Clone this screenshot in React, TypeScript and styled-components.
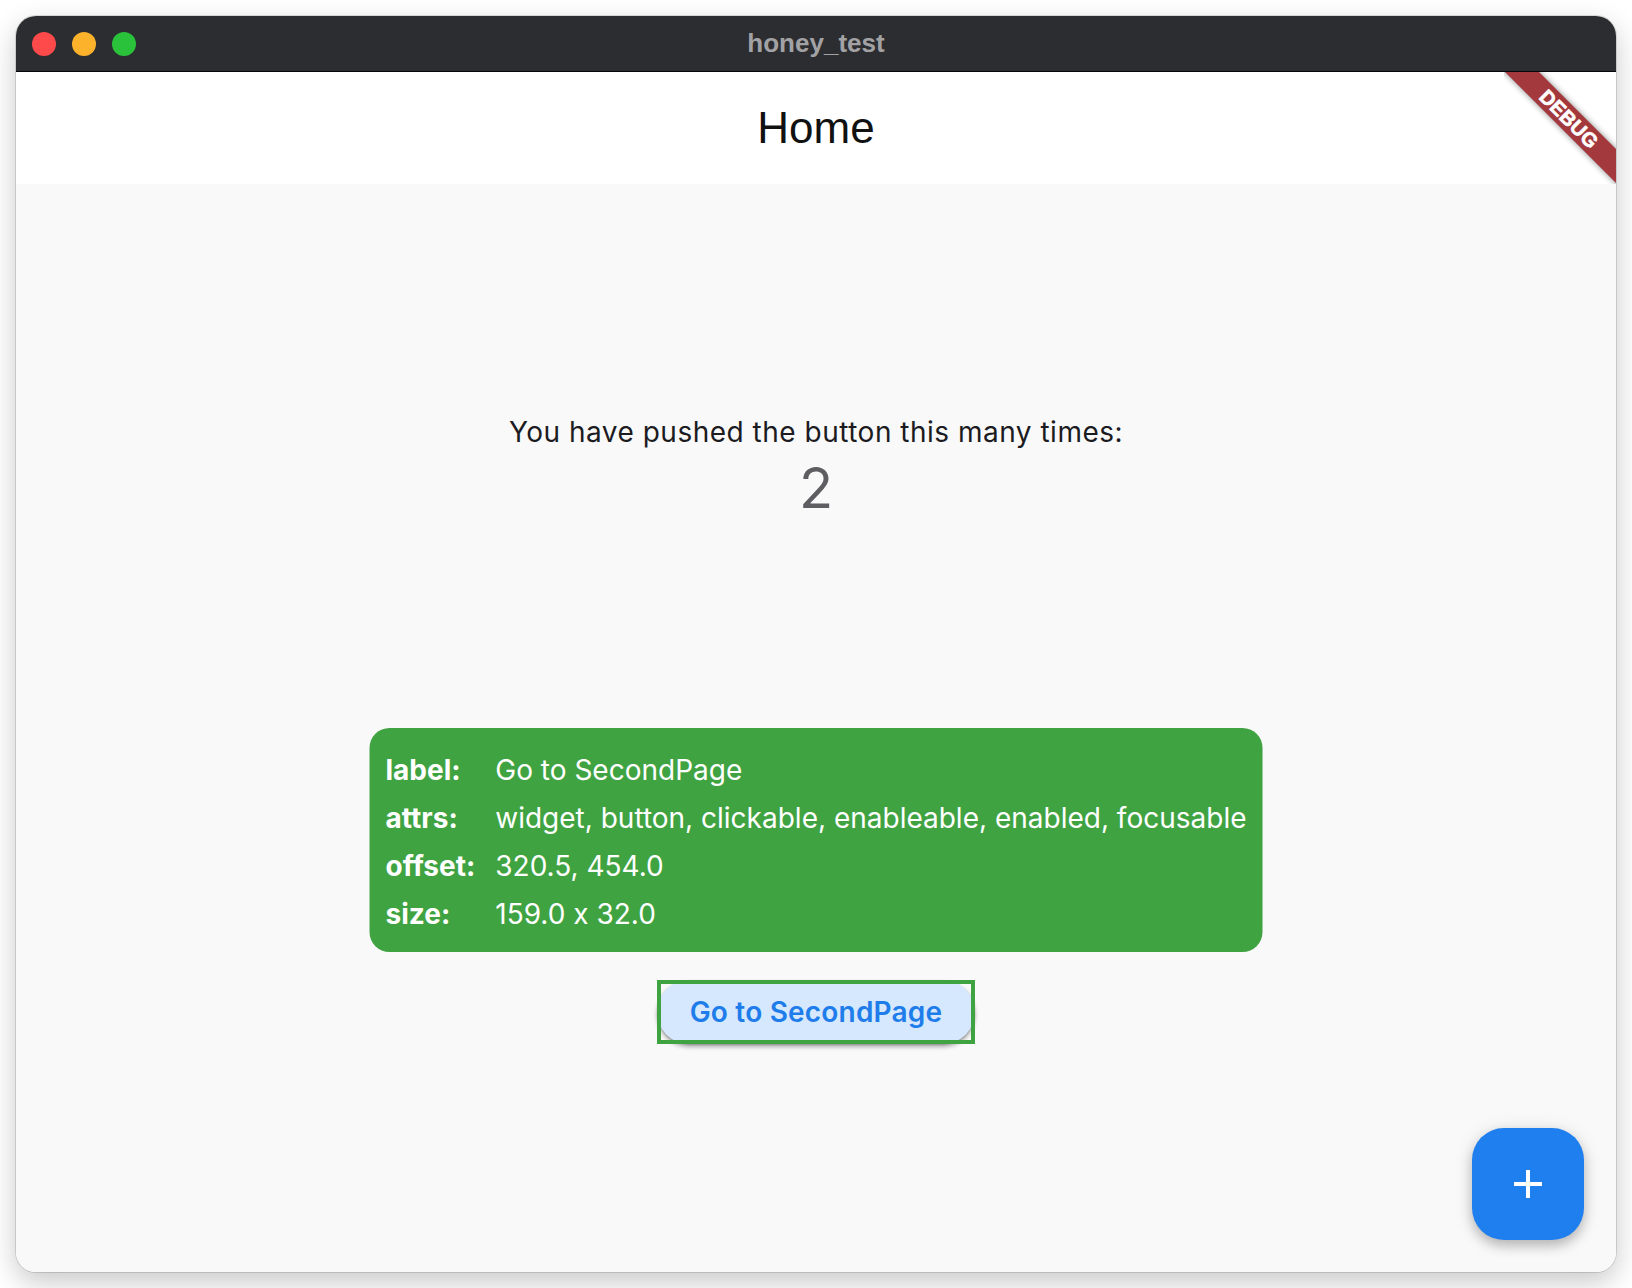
import React from "react";
import styled, { createGlobalStyle } from "styled-components";

const GlobalStyle = createGlobalStyle`
  html, body {
    margin: 0;
    padding: 0;
    background: #ffffff;
  }
  * { box-sizing: border-box; }
`;

const Page = styled.div`
  width: 1632px;
  height: 1288px;
  padding: 16px;
  background: #ffffff;
`;

const Window = styled.div`
  width: 1600px;
  height: 1256px;
  border-radius: 20px;
  overflow: hidden;
  display: flex;
  flex-direction: column;
  box-shadow: 0 10px 28px rgba(0, 0, 0, 0.22), 0 0 0 1px rgba(0, 0, 0, 0.12);
`;

const TitleBar = styled.div`
  height: 56px;
  flex: none;
  background: #2c2d31;
  border-bottom: 1px solid #050505;
  display: grid;
  grid-template-columns: 1fr auto 1fr;
  align-items: center;
  padding: 0 16px;
`;

const Lights = styled.div`
  display: flex;
  gap: 16px;
  align-items: center;
`;

const Light = styled.span<{ $color: string }>`
  width: 24px;
  height: 24px;
  border-radius: 50%;
  background: ${(p) => p.$color};
`;

const WindowTitle = styled.div`
  font-family: "Liberation Sans", Arial, sans-serif;
  font-weight: 700;
  font-size: 26px;
  color: #a2a2a5;
  margin-top: -1px;
`;

const Content = styled.div`
  flex: 1;
  position: relative;
  display: flex;
  flex-direction: column;
  overflow: hidden;
`;

const AppBar = styled.header`
  height: 112px;
  flex: none;
  background: #ffffff;
  display: flex;
  align-items: center;
  justify-content: center;
`;

const AppTitle = styled.h1`
  margin: 0;
  font-family: "Liberation Sans", Arial, sans-serif;
  font-weight: 400;
  font-size: 44px;
  line-height: 1;
  color: #111111;
`;

const Body = styled.main`
  flex: 1;
  background: #f9f9f9;
  display: flex;
  flex-direction: column;
  align-items: center;
  justify-content: center;
`;

const Caption = styled.div`
  font-family: Inter, "Noto Sans", sans-serif;
  font-size: 28px;
  line-height: 40px;
  letter-spacing: 0.5px;
  color: #1c1b1f;
`;

const Count = styled.div`
  font-family: Inter, "Noto Sans", sans-serif;
  font-size: 56px;
  line-height: 72px;
  color: #5e5e62;
`;

const ButtonArea = styled.div`
  position: relative;
  margin-top: 456px;
`;

const InfoBox = styled.div`
  position: absolute;
  left: 50%;
  bottom: calc(100% + 28px);
  transform: translateX(-50%);
  background: #40a342;
  border-radius: 20px;
  padding: 18px 16px 14px 16px;
  display: grid;
  grid-template-columns: auto auto;
  column-gap: 20px;
  white-space: nowrap;
  font-family: Inter, "Noto Sans", sans-serif;
  font-size: 28px;
  line-height: 48px;
  color: #ffffff;
`;

const InfoKey = styled.span`
  font-weight: 700;
`;

const InfoValue = styled.span`
  font-weight: 400;
`;

const PushButton = styled.button`
  position: relative;
  width: 318px;
  height: 64px;
  border: none;
  border-radius: 32px;
  background: #d6e8fd;
  color: #1e7dea;
  font-family: Inter, "Noto Sans", sans-serif;
  font-weight: 600;
  font-size: 28px;
  letter-spacing: 0.2px;
  padding: 0;
  box-shadow: 0 3px 4px rgba(0, 0, 0, 0.3), 0 1px 2px rgba(0, 0, 0, 0.2);
  cursor: pointer;

  &::after {
    content: "";
    position: absolute;
    inset: 0;
    border: 4px solid #40a342;
  }
`;

const Fab = styled.button`
  position: absolute;
  right: 32px;
  bottom: 32px;
  width: 112px;
  height: 112px;
  border: none;
  border-radius: 32px;
  background: #1f7fef;
  display: flex;
  align-items: center;
  justify-content: center;
  padding: 0;
  box-shadow: 0 6px 12px rgba(0, 0, 0, 0.22), 0 2px 20px rgba(0, 0, 0, 0.1);
  cursor: pointer;
`;

const BannerClip = styled.div`
  position: absolute;
  top: 0;
  right: 0;
  width: 112px;
  height: 112px;
  overflow: hidden;
  pointer-events: none;
`;

const Ribbon = styled.div`
  position: absolute;
  left: -35px;
  top: 35px;
  width: 200px;
  height: 24px;
  transform: rotate(45deg);
  background: #a3393d;
  box-shadow: 0 0 6px rgba(0, 0, 0, 0.45);
  color: #ffffff;
  font-family: "Liberation Sans", Arial, sans-serif;
  font-weight: 700;
  font-size: 20px;
  line-height: 24px;
  text-align: center;
  letter-spacing: 0.3px;
  -webkit-text-stroke: 0.7px #ffffff;
`;

const info: [string, string][] = [
  ["label:", "Go to SecondPage"],
  ["attrs:", "widget, button, clickable, enableable, enabled, focusable"],
  ["offset:", "320.5, 454.0"],
  ["size:", "159.0 x 32.0"],
];

export default function App() {
  return (
    <>
      <GlobalStyle />
      <Page>
        <Window>
          <TitleBar>
            <Lights>
              <Light $color="#fe4a4a" />
              <Light $color="#fcb22a" />
              <Light $color="#2ac23b" />
            </Lights>
            <WindowTitle>honey_test</WindowTitle>
            <span />
          </TitleBar>
          <Content>
            <AppBar>
              <AppTitle>Home</AppTitle>
            </AppBar>
            <Body>
              <Caption>You have pushed the button this many times:</Caption>
              <Count>2</Count>
              <ButtonArea>
                <InfoBox>
                  {info.map(([k, v]) => (
                    <React.Fragment key={k}>
                      <InfoKey>{k}</InfoKey>
                      <InfoValue>{v}</InfoValue>
                    </React.Fragment>
                  ))}
                </InfoBox>
                <PushButton>Go to SecondPage</PushButton>
              </ButtonArea>
            </Body>
            <Fab aria-label="Increment">
              <svg width="48" height="48" viewBox="0 0 24 24" fill="#ffffff">
                <path d="M19 13h-6v6h-2v-6H5v-2h6V5h2v6h6v2z" />
              </svg>
            </Fab>
            <BannerClip>
              <Ribbon>DEBUG</Ribbon>
            </BannerClip>
          </Content>
        </Window>
      </Page>
    </>
  );
}
